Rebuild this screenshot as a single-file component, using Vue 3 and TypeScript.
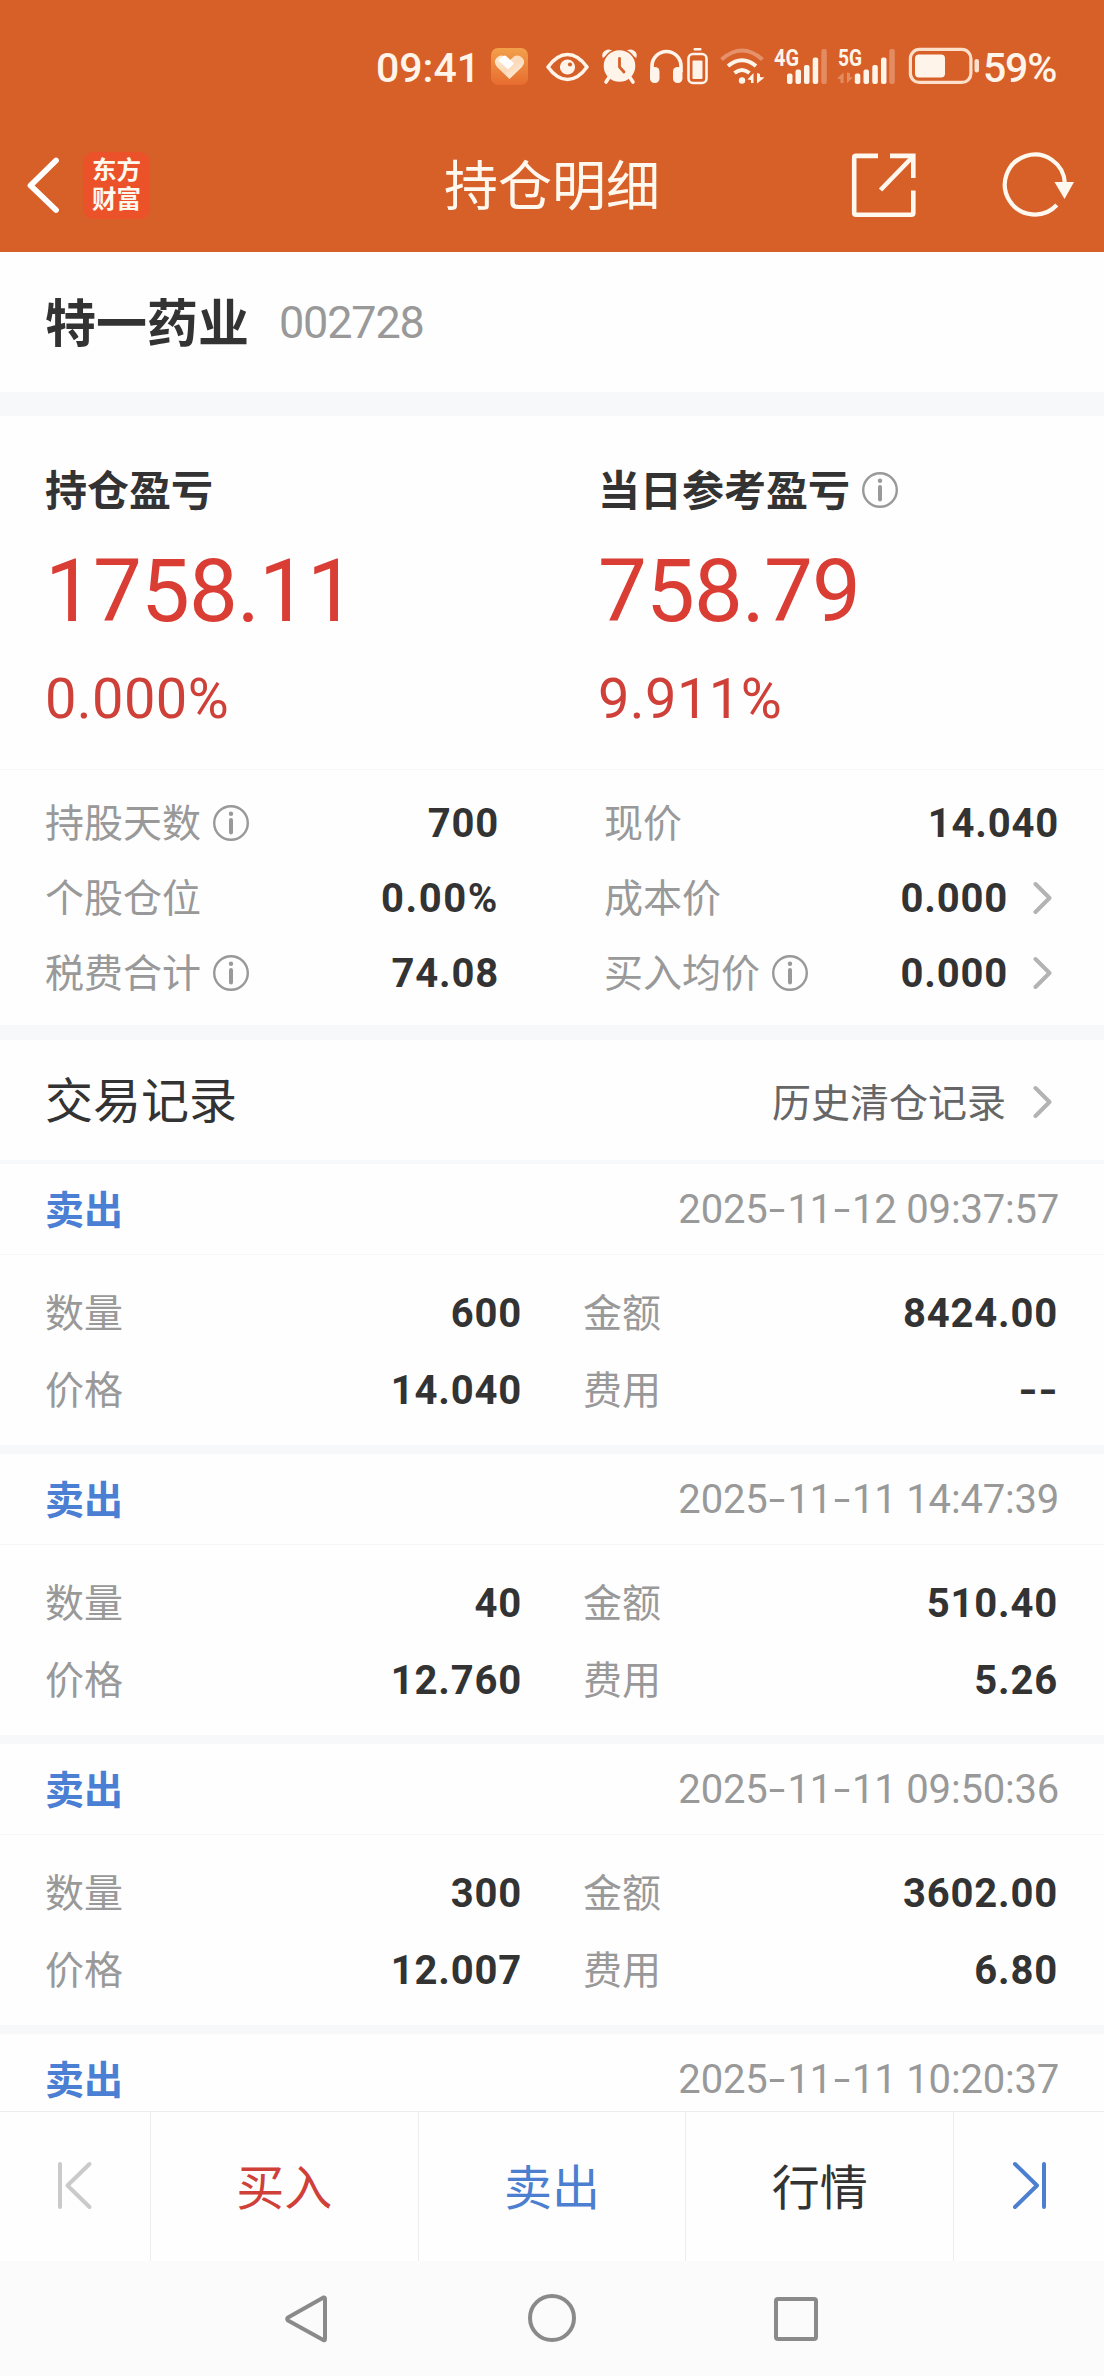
<script setup lang="ts">
interface Metric {
  label: string
  value: string
  info?: boolean
  link?: boolean
}

interface TradeRecord {
  side: string
  time: string
  quantity: string
  amount: string
  price: string
  fee: string
}

const summary = [
  { label: '持仓盈亏', value: '1758.11', percent: '0.000%', info: false },
  { label: '当日参考盈亏', value: '758.79', percent: '9.911%', info: true },
]

const leftMetrics: Metric[] = [
  { label: '持股天数', value: '700', info: true },
  { label: '个股仓位', value: '0.00%' },
  { label: '税费合计', value: '74.08', info: true },
]

const rightMetrics: Metric[] = [
  { label: '现价', value: '14.040' },
  { label: '成本价', value: '0.000', link: true },
  { label: '买入均价', value: '0.000', info: true, link: true },
]

const metricColumns = [leftMetrics, rightMetrics]

const records: TradeRecord[] = [
  { side: '卖出', time: '2025-11-12 09:37:57', quantity: '600', amount: '8424.00', price: '14.040', fee: '--' },
  { side: '卖出', time: '2025-11-11 14:47:39', quantity: '40', amount: '510.40', price: '12.760', fee: '5.26' },
  { side: '卖出', time: '2025-11-11 09:50:36', quantity: '300', amount: '3602.00', price: '12.007', fee: '6.80' },
  { side: '卖出', time: '2025-11-11 10:20:37', quantity: '', amount: '', price: '', fee: '' },
]

// Separates hyphens from digits so they can be drawn wider.
function pieces(text: string): string[] {
  return text.split(/(-)/).filter((part) => part.length > 0)
}
</script>

<template>
  <div class="screen">
    <header class="header">
      <div class="status">
        <span class="clock">09:41</span>
        <svg class="heart" viewBox="491 47 37 40" width="37" height="40">
          <defs>
            <linearGradient id="tile" x1="0" y1="0" x2="0" y2="1">
              <stop offset="0" stop-color="#f2a04a" />
              <stop offset="1" stop-color="#e76c30" />
            </linearGradient>
            <linearGradient id="heartFill" x1="0" y1="0" x2="1" y2="1">
              <stop offset="0" stop-color="#ffe9d2" />
              <stop offset="0.5" stop-color="#fbd9b8" />
              <stop offset="1" stop-color="#fff3e6" />
            </linearGradient>
          </defs>
          <rect x="491" y="48" width="37" height="37" rx="7" fill="url(#tile)" />
          <path d="M509.5 79 L497 67 Q493 62 496.500 58 Q500.500 54 505 56.500 L509.500 60.500 L514 56.500 Q518.500 54 522.500 58 Q526 62 522 67 Z" fill="url(#heartFill)" />
          <path d="M500 60 L508 67.500 L512 63.500 L505 57 Z" fill="#fff" stroke="#fff" stroke-width="3" stroke-linejoin="round" />
        </svg>
        <svg class="eye" viewBox="545 47 45 40" width="45" height="40">
          <path d="M548 67 Q557 54.500 567.500 54.500 Q578 54.500 587 67 Q578 79.500 567.500 79.500 Q557 79.500 548 67 Z" fill="none" stroke="#fff4ea" stroke-width="3.600" stroke-linejoin="round" />
          <circle cx="567.5" cy="67" r="7.600" fill="#fff4ea" />
          <circle cx="570" cy="64.500" r="2.100" fill="#d75f28" />
        </svg>
        <svg class="alarm" viewBox="601 47 37 40" width="37" height="40">
          <path d="M602.800 58 Q601 53 605 50.800 Q609 48 613 51 Z M636.200 58 Q638 53 634 50.800 Q630 48 626 51 Z" fill="#fff4ea" />
          <circle cx="619.5" cy="66" r="17.400" fill="#d75f28" />
          <circle cx="619.5" cy="66" r="15.800" fill="#fff4ea" />
          <path d="M609 77.500 L606 82 M630 77.500 L633 82" stroke="#fff4ea" stroke-width="3.600" stroke-linecap="round" />
          <path d="M619.500 58.500 V67 L624 72" fill="none" stroke="#d75f28" stroke-width="2.800" stroke-linecap="round" />
        </svg>
        <svg class="headphones" viewBox="649 47 35 40" width="35" height="40">
          <path d="M652 72 V66 A14.500 14.500 0 0 1 681 66 V72" fill="none" stroke="#fff4ea" stroke-width="3.600" />
          <rect x="650" y="67" width="9.500" height="16" rx="4.500" fill="#fff4ea" />
          <rect x="673" y="67" width="9.500" height="16" rx="4.500" fill="#fff4ea" />
        </svg>
        <svg class="mini" viewBox="686 47 23 40" width="23" height="40">
          <rect x="693.5" y="48" width="8" height="2.600" rx="1" fill="#fff4ea" />
          <rect x="688.5" y="54" width="18" height="29" rx="4.500" fill="none" stroke="#fff4ea" stroke-width="2.600" />
          <rect x="692.5" y="60.500" width="10" height="18.500" rx="1" fill="#fff4ea" />
        </svg>
        <svg class="wifi" viewBox="719 47 46 40" width="46" height="40">
          <g fill="none" stroke="#fff4ea" stroke-width="4">
            <path d="M721.500 59.500 Q742 41.500 762.500 59.500" opacity="0.350" />
            <path d="M728 66 Q742 54.500 756 66" />
            <path d="M734.500 73 Q742 67 749.500 73" />
          </g>
          <circle cx="742" cy="80.500" r="3.200" fill="#fff4ea" />
          <path d="M753.500 73 V83 H751 V80 L747.500 79.500 Z M757 73 V83.500 L764.500 77.500 L760 77 V74 Z" fill="#fff4ea" />
        </svg>
        <svg class="cell" viewBox="773 37 55 60" width="55" height="60">
          <text class="net" x="774" y="66" textLength="25" lengthAdjust="spacingAndGlyphs">4G</text>
          <g fill="#fff4ea">
            <rect x="787" y="73.500" width="5.500" height="10.500" rx="2" />
            <rect x="795.5" y="69.500" width="5.500" height="14.500" rx="2" />
            <rect x="804" y="65" width="5.500" height="19" rx="2" />
            <rect x="812.7" y="57.500" width="5.500" height="26.500" rx="2" />
            <rect x="821.3" y="49" width="5.500" height="35" rx="2" opacity="0.300" />
          </g>
        </svg>
        <svg class="cell" viewBox="836 37 60 60" width="60" height="60">
          <text class="net" x="838" y="66" textLength="24" lengthAdjust="spacingAndGlyphs">5G</text>
          <g fill="#fff4ea">
            <path d="M843.500 72.500 V83 H840.500 V79 L837 78.500 Z M847 72.500 V83 L853 77.500 L850 77 V73 Z" opacity="0.300" />
            <rect x="854.8" y="73.500" width="5.500" height="10.500" rx="2" />
            <rect x="863.5" y="69.500" width="5.500" height="14.500" rx="2" />
            <rect x="872.3" y="65" width="5.500" height="19" rx="2" />
            <rect x="881" y="57.500" width="5.500" height="26.500" rx="2" />
            <rect x="889.3" y="49" width="5.500" height="35" rx="2" opacity="0.300" />
          </g>
        </svg>
        <svg class="battery" viewBox="908 47 72 40" width="72" height="40">
          <rect x="910.4" y="49.400" width="60.500" height="33" rx="9" fill="none" stroke="#fde0cb" stroke-width="3.200" />
          <rect x="915" y="54.500" width="30" height="23" rx="4" fill="#fff4ea" />
          <rect x="974.5" y="59" width="4.500" height="13.500" rx="2.200" fill="#fde0cb" />
        </svg>
        <span class="charge">59%</span>
      </div>
      <div class="nav">
        <div class="nav-side">
          <svg class="back" viewBox="26 154 36 60" width="36" height="60">
            <path d="M56 159.500 L30.500 184.500 L56 209" fill="none" stroke="#fff" stroke-width="5.800" stroke-linecap="round" stroke-linejoin="round" />
          </svg>
          <div class="logo"><span>东方</span><span>财富</span></div>
        </div>
        <h1 class="title">持仓明细</h1>
        <div class="nav-side tools">
          <svg viewBox="850 150 68 68" width="68" height="68">
            <g fill="none" stroke="#fff8ee" stroke-width="4.600">
              <path d="M878 154.900 H856 Q854.200 154.900 854.200 156.700 V212 Q854.200 213.700 856 213.700 H911.500 Q913.300 213.700 913.300 212 V189.500" />
              <path d="M890 154.900 H913.300 V177" />
              <path d="M912.500 156 L880.500 189" />
            </g>
          </svg>
          <svg class="refresh" viewBox="1000 150 76 68" width="76" height="68">
            <path d="M1064.800 182 A30 30 0 1 0 1056.800 204" fill="none" stroke="#fff8ee" stroke-width="4.200" />
            <path d="M1054.500 181 H1074 L1064.500 198 Z" fill="#fff8ee" />
          </svg>
        </div>
      </div>
    </header>

    <main class="content">
      <section class="stock">
        <h2 class="stock-name">特一药业</h2>
        <span class="stock-code">002728</span>
      </section>

      <section class="summary">
        <div v-for="item in summary" :key="item.label" class="summary-item">
          <div class="summary-label">
            <span>{{ item.label }}</span>
            <svg v-if="item.info" class="info" viewBox="0 0 36 36" width="36" height="36">
              <circle cx="18" cy="18" r="16.800" /><circle class="dot" cx="18" cy="8.800" r="2.200" /><path d="M18 15 V27.500" />
            </svg>
          </div>
          <div class="summary-value">{{ item.value }}</div>
          <div class="summary-percent">{{ item.percent }}</div>
        </div>
      </section>

      <section class="metrics">
        <div v-for="(column, index) in metricColumns" :key="index" class="metric-column">
          <div v-for="metric in column" :key="metric.label" class="metric">
            <span class="label">{{ metric.label }}</span>
            <svg v-if="metric.info" class="info" viewBox="0 0 36 36" width="36" height="36">
              <circle cx="18" cy="18" r="16.800" /><circle class="dot" cx="18" cy="8.800" r="2.200" /><path d="M18 15 V27.500" />
            </svg>
            <span class="number" :class="{ ratio: metric.value.endsWith('%') }">{{ metric.value }}</span>
            <svg v-if="metric.link" class="chevron" viewBox="0 0 20 34" width="20" height="34">
              <path d="M2.500 3 L16.500 17 L2.500 31" />
            </svg>
          </div>
        </div>
      </section>

      <section class="records-head">
        <h3>交易记录</h3>
        <a class="history">
          <span>历史清仓记录</span>
          <svg class="chevron" viewBox="0 0 20 34" width="20" height="34">
            <path d="M2.500 3 L16.500 17 L2.500 31" />
          </svg>
        </a>
      </section>

      <section class="records">
        <article v-for="record in records" :key="record.time" class="record">
          <div class="record-head">
            <span class="side">{{ record.side }}</span>
            <time class="time"><span v-for="(part, i) in pieces(record.time)" :key="i" :class="{ dash: part === '-' }">{{ part }}</span></time>
          </div>
          <div v-if="record.quantity" class="record-body">
            <div class="cell-pair"><span class="label">数量</span><span class="number">{{ record.quantity }}</span></div>
            <div class="cell-pair"><span class="label">金额</span><span class="number">{{ record.amount }}</span></div>
            <div class="cell-pair"><span class="label">价格</span><span class="number">{{ record.price }}</span></div>
            <div class="cell-pair"><span class="label">费用</span><span class="number"><span v-for="(part, i) in pieces(record.fee)" :key="i" :class="{ dash: part === '-' }">{{ part }}</span></span></div>
          </div>
        </article>
      </section>
    </main>

    <footer class="actions">
      <button class="step">
        <svg viewBox="56 2158 40 52" width="40" height="52">
          <path d="M61 2163 V2206 M90.500 2163 L68.500 2184.500 L90.500 2206" stroke="#cacaca" />
        </svg>
      </button>
      <button class="action buy">买入</button>
      <button class="action sell">卖出</button>
      <button class="action quote">行情</button>
      <button class="step next">
        <svg viewBox="1009 2158 40 52" width="40" height="52">
          <path d="M1044 2163 V2206 M1015 2163 L1037 2184.500 L1015 2206" stroke="#4c7fcf" />
        </svg>
      </button>
    </footer>

    <div class="system">
      <svg viewBox="282 2292 48 54" width="48" height="54">
        <path d="M323.500 2297.500 Q325 2297 325 2299 V2339 Q325 2341 323.300 2340 L288 2320.500 Q286.500 2319 288 2317.500 Z" />
      </svg>
      <svg class="home" viewBox="525 2292 54 54" width="54" height="54"><circle cx="552" cy="2318" r="22" /></svg>
      <svg viewBox="770 2292 52 54" width="52" height="54"><rect x="776" y="2299" width="40" height="40" rx="2" /></svg>
    </div>
  </div>
</template>

<style>
body {
  margin: 0;
  background: #fff;
}
</style>

<style scoped>
.screen {
  display: flex;
  flex-direction: column;
  width: 1104px;
  height: 2376px;
  overflow: hidden;
  background: #fefefe;
  color: #333;
  font-family: "Noto Sans CJK SC", sans-serif;
}

svg {
  display: block;
  flex: none;
}

h1,
h2,
h3 {
  margin: 0;
}

.header {
  flex: none;
  height: 252px;
  background: #d75f28;
  color: #fff8ee;
}

.status {
  display: flex;
  align-items: center;
  box-sizing: border-box;
  height: 118px;
  padding: 16px 0 0 376px;
}

.clock,
.charge {
  padding-top: 1px;
  font: 500 41px/40px Roboto, sans-serif;
  color: #fff4ea;
  white-space: nowrap;
}

.clock {
  width: 100px;
}

.heart { margin-left: 15px; }
.eye { margin-left: 17px; }
.alarm { margin-left: 11px; }
.headphones { margin-left: 11px; }
.mini { margin-left: 2px; }
.wifi { margin-left: 10px; }
.cell { margin-left: 8px; }
.battery { margin-left: 12px; }
.charge { margin-left: 3px; letter-spacing: -1.2px; }

.net {
  font: 700 23px Roboto, sans-serif;
  fill: #fff4ea;
}

.nav {
  display: flex;
  align-items: center;
  height: 134px;
}

.nav-side {
  display: flex;
  align-items: center;
  width: 300px;
}

.back {
  margin-left: 26px;
}

.logo {
  display: flex;
  flex-direction: column;
  align-items: center;
  justify-content: center;
  width: 67px;
  height: 67px;
  margin-left: 21px;
  border-radius: 11px;
  background: #ec5229;
  font: 700 24.5px/29px Roboto, "Noto Sans CJK SC", sans-serif;
}

.title {
  flex: 1;
  padding-bottom: 4px;
  text-align: center;
  font-size: 54px;
  font-weight: 400;
  line-height: 80px;
}

.tools {
  justify-content: flex-end;
}

.refresh {
  margin: 0 28px 0 82px;
}

.content {
  flex: 1;
  min-height: 0;
  overflow: hidden;
}

.stock {
  display: flex;
  align-items: center;
  height: 140px;
  padding-left: 45px;
  border-bottom: 24px solid #f6f8fa;
}

.stock-name {
  padding-bottom: 5px;
  font-size: 51px;
  font-weight: 700;
  line-height: 70px;
}

.stock-code {
  margin-left: 30px;
  padding-top: 1px;
  font: 400 45px/60px Roboto, sans-serif;
  letter-spacing: -1.2px;
  color: #999;
}

.summary {
  display: flex;
  box-sizing: border-box;
  height: 354px;
  padding: 44px 0 0 45px;
  border-bottom: 1px solid #f5f6f7;
}

.summary-item {
  flex: none;
  width: 553px;
}

.summary-item + .summary-item {
  width: 460px;
}

.summary-label {
  display: flex;
  align-items: center;
  height: 60px;
  font-size: 42px;
  font-weight: 700;
  line-height: 56px;
}

.summary-label span {
  padding-bottom: 4px;
}

.info {
  margin-left: 12px;
  fill: none;
  stroke: #999;
  stroke-width: 2.4px;
}

.info path {
  stroke-width: 4px;
  stroke-linecap: round;
}

.info .dot {
  fill: #999;
  stroke: none;
}

.summary-value {
  height: 100px;
  margin-top: 21px;
  font: 400 87px/100px Roboto, sans-serif;
  letter-spacing: -0.9px;
  color: #d93d34;
}

.summary-percent {
  height: 70px;
  margin-top: 23px;
  font: 400 56px/70px Roboto, sans-serif;
  letter-spacing: 0.4px;
  color: #cf4039;
}

.metrics {
  display: flex;
  box-sizing: border-box;
  height: 270px;
  padding: 15px 45px 0 45px;
  border-bottom: 15px solid #f6f8fa;
}

.metric-column {
  width: 454px;
}

.metric-column + .metric-column {
  width: 455px;
  margin-left: 105px;
}

.metric {
  display: flex;
  align-items: center;
  height: 75px;
}

.label {
  padding-bottom: 5px;
  font-size: 39px;
  line-height: 56px;
  color: #999;
}

.number {
  margin-left: auto;
  padding-top: 2px;
  font: 700 40px/56px Roboto, sans-serif;
  letter-spacing: 0.8px;
  color: #333;
}

.number.ratio {
  letter-spacing: 1.6px;
}

.chevron {
  margin: 0 6px 0 25px;
  fill: none;
  stroke: #b3b3b3;
  stroke-width: 4px;
  stroke-linecap: round;
  stroke-linejoin: round;
}

.records-head {
  display: flex;
  align-items: center;
  justify-content: space-between;
  height: 120px;
  padding: 0 45px 0 45px;
  border-bottom: 4px solid #f6f8fa;
}

.records-head h3 {
  padding-bottom: 6px;
  font-size: 48px;
  font-weight: 400;
  line-height: 70px;
}

.history {
  display: flex;
  align-items: center;
  padding-top: 3px;
  font-size: 39px;
  line-height: 56px;
  color: #666;
}

.history span {
  padding-bottom: 4px;
}

.history .chevron {
  margin-left: 27px;
}

.record {
  border-bottom: 9px solid #f6f8fa;
}

.record-head {
  display: flex;
  align-items: center;
  justify-content: space-between;
  height: 90px;
  padding: 0 45px;
  border-bottom: 1px solid #f5f6f7;
}

.side {
  padding-bottom: 5px;
  font-size: 39px;
  font-weight: 700;
  line-height: 56px;
  color: #4a7fd4;
}

.time {
  padding-top: 2px;
  font: 400 40px/56px Roboto, sans-serif;
  letter-spacing: -0.2px;
  white-space: nowrap;
  color: #999;
}

.dash {
  display: inline-block;
  width: 20px;
  text-align: center;
  letter-spacing: 0;
  transform: scaleX(1.25);
}

.time .dash {
  transform: scaleX(1.5);
}

.record-body {
  display: grid;
  grid-template-columns: 477px 475px;
  column-gap: 61px;
  grid-auto-rows: 77px;
  box-sizing: border-box;
  height: 190px;
  padding: 19px 45px 0 45px;
}

.cell-pair {
  display: flex;
  align-items: center;
}

.actions {
  display: flex;
  flex: none;
  box-sizing: border-box;
  height: 150px;
  border-top: 1px solid #ececec;
  background: #fefefe;
}

.actions button {
  display: flex;
  align-items: center;
  justify-content: center;
  margin: 0;
  padding: 0 0 4px;
  border: 0;
  border-right: 1px solid #ececec;
  background: none;
  font: 400 48px/70px "Noto Sans CJK SC", sans-serif;
}

.actions .step {
  flex: none;
  width: 151px;
}

.actions .action {
  flex: 1;
  padding-bottom: 5px;
}

.actions .next {
  width: 150px;
  border-right: 0;
}

.step svg {
  fill: none;
  stroke-width: 4px;
  stroke-linecap: round;
  stroke-linejoin: round;
}

.buy { color: #cf4039; }
.sell { color: #4c7fcf; }
.quote { color: #333; }

.system {
  display: flex;
  flex: none;
  box-sizing: border-box;
  height: 115px;
  padding: 31px 0 0 282px;
  background: #fbfbfb;
}

.system .home {
  margin: 0 191px 0 195px;
}

.system svg {
  fill: none;
  stroke: #8a8a8a;
  stroke-width: 4px;
  stroke-linejoin: round;
}
</style>
